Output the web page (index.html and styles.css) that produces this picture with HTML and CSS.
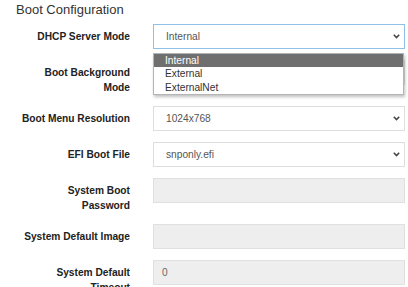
FILE: index.html
```html
<!DOCTYPE html>
<html lang="en">
<head>
<meta charset="utf-8">
<title>Boot Configuration</title>
<link rel="stylesheet" href="styles.css">
</head>
<body>
<h2 class="title">Boot Configuration</h2>
<div class="form">
  <label class="lbl">DHCP Server Mode</label>
  <div class="ctl">
    <select class="field select focused"><option>Internal</option><option>External</option><option>ExternalNet</option></select>
    <svg class="chev" width="7" height="5" viewBox="0 0 7 5"><path d="M0.8 0.8 L3.5 3.6 L6.2 0.8" fill="none" stroke="#444" stroke-width="1.5"/></svg>
    <div class="dropdown">
      <div class="opt active">Internal</div>
      <div class="opt">External</div>
      <div class="opt">ExternalNet</div>
    </div>
  </div>

  <label class="lbl">Boot Background Mode</label>
  <div class="ctl">
    <select class="field select"><option>Default</option></select>
  </div>

  <label class="lbl">Boot Menu Resolution</label>
  <div class="ctl">
    <select class="field select"><option>1024x768</option></select>
    <svg class="chev" width="7" height="5" viewBox="0 0 7 5"><path d="M0.8 0.8 L3.5 3.6 L6.2 0.8" fill="none" stroke="#444" stroke-width="1.5"/></svg>
  </div>

  <label class="lbl">EFI Boot File</label>
  <div class="ctl">
    <select class="field select"><option>snponly.efi</option></select>
    <svg class="chev" width="7" height="5" viewBox="0 0 7 5"><path d="M0.8 0.8 L3.5 3.6 L6.2 0.8" fill="none" stroke="#444" stroke-width="1.5"/></svg>
  </div>

  <label class="lbl">System Boot Password</label>
  <div class="ctl">
    <input class="field input" type="text" value="" disabled>
  </div>

  <label class="lbl">System Default Image</label>
  <div class="ctl">
    <input class="field input" type="text" value="" disabled>
  </div>

  <label class="lbl">System Default Timeout</label>
  <div class="ctl">
    <input class="field input" type="text" value="0" disabled>
  </div>
</div>
</body>
</html>
```
FILE: styles.css
```css
html, body {
  margin: 0;
  padding: 0;
  background: #fff;
}
body {
  width: 408px;
  height: 287px;
  overflow: hidden;
  font-family: "Liberation Sans", Arial, sans-serif;
}
.title {
  margin: 0 0 7.5px 0;
  padding: 1.5px 0 0 16px;
  font-size: 13px;
  line-height: 15px;
  font-weight: normal;
  color: #333;
}
.form {
  display: grid;
  grid-template-columns: 112px 252px;
  column-gap: 23px;
  row-gap: 11px;
  padding-left: 18px;
  align-items: start;
}
.lbl {
  text-align: right;
  font-size: 10.2px;
  line-height: 15px;
  font-weight: bold;
  color: #222;
  padding-top: 5px;
}
.ctl {
  position: relative;
  height: 25px;
}
.field {
  display: block;
  width: 100%;
  height: 25px;
  box-sizing: border-box;
  margin: 0;
  border: 1px solid #dedede;
  border-radius: 0;
  font-family: "Liberation Sans", Arial, sans-serif;
  font-size: 10.2px;
  color: #555;
  background: #fff;
  outline: none;
}
.select {
  appearance: none;
  -webkit-appearance: none;
  padding: 0 16px 0 12px;
}
.select.focused {
  border-color: #8fc1e8;
}
.input {
  padding: 0 8px;
}
.input:disabled {
  background: #eeeeee;
  color: #666;
  border-color: #e0e0e0;
}
.chev {
  position: absolute;
  right: 5px;
  top: 10px;
}
.dropdown {
  position: absolute;
  top: 28.5px;
  left: 0;
  right: 1px;
  background: #fff;
  border: 1px solid #b5b5b5;
  box-shadow: 1px 2px 3px rgba(0, 0, 0, 0.25);
  z-index: 5;
}
.opt {
  height: 13.5px;
  line-height: 13.5px;
  padding-left: 11px;
  font-size: 10.2px;
  color: #333;
}
.opt.active {
  background: #6f6f6f;
  color: #fff;
}
```
